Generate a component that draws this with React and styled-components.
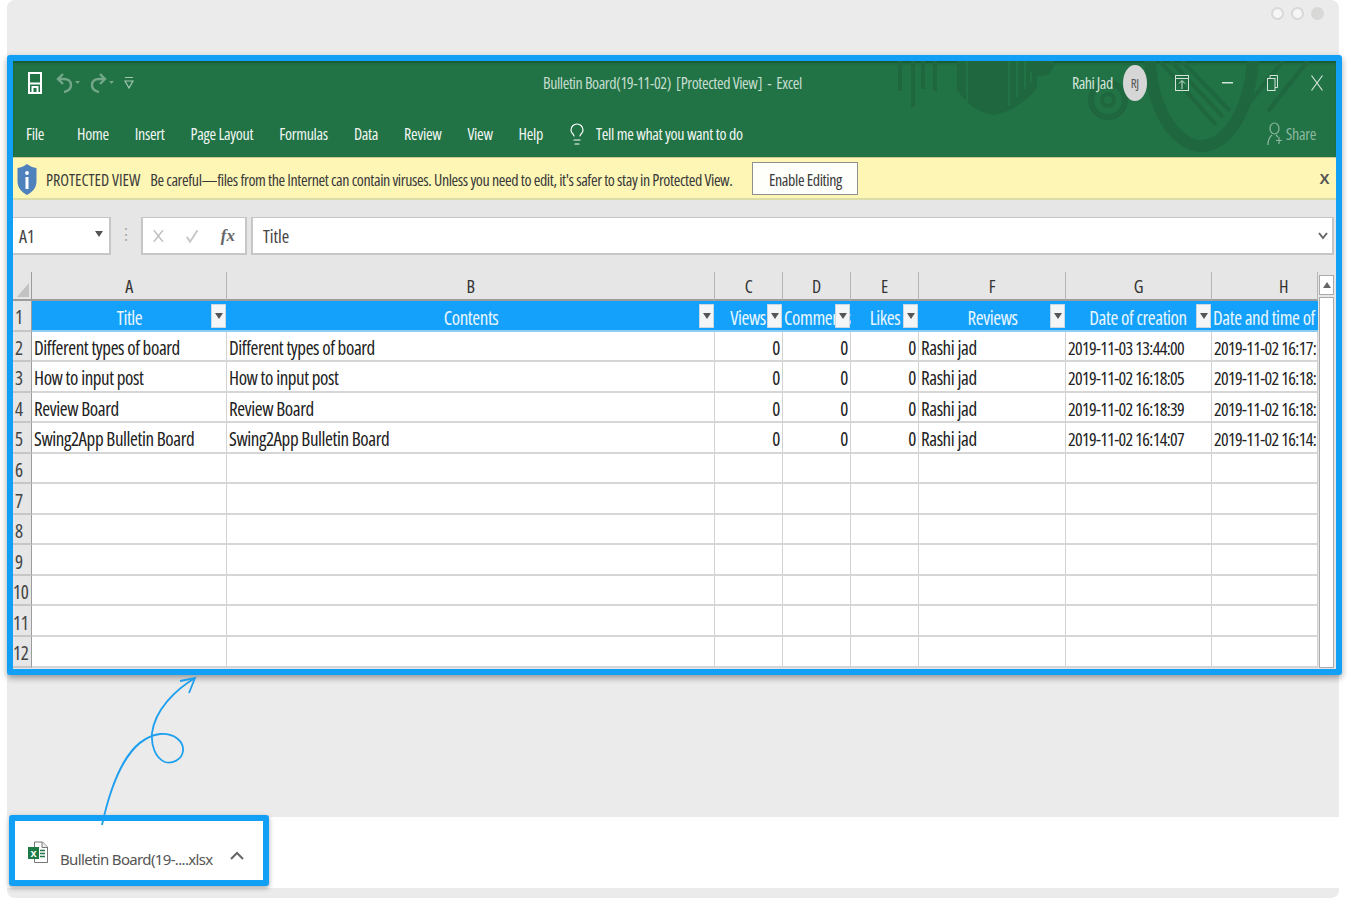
import styled, { createGlobalStyle } from 'styled-components';
import { Lightbulb } from 'lucide-react';

const columns = ['A', 'B', 'C', 'D', 'E', 'F', 'G', 'H'];
const headers = [
  { text: 'Title', filter: true },
  { text: 'Contents', filter: true },
  { text: 'Views', filter: true, pad: 2 },
  { text: 'Comments', filter: true, left: true },
  { text: 'Likes', filter: true },
  { text: 'Reviews', filter: true },
  { text: 'Date of creation', filter: true, pad: 2 },
  { text: 'Date and time of c', filter: false, left: true },
];
const rows = [
  ['Different types of board', '2019-11-03 13:44:00', '2019-11-02 16:17:'],
  ['How to input post', '2019-11-02 16:18:05', '2019-11-02 16:18:'],
  ['Review Board', '2019-11-02 16:18:39', '2019-11-02 16:18:'],
  ['Swing2App Bulletin Board', '2019-11-02 16:14:07', '2019-11-02 16:14:'],
];
const tabs = ['File', 'Home', 'Insert', 'Page Layout', 'Formulas', 'Data', 'Review', 'View', 'Help'];

const GlobalStyle = createGlobalStyle`
  html, body {
    margin: 0;
    padding: 0;
    background: #fff;
    overflow: hidden;
  }
  * {
    box-sizing: border-box;
  }
  body {
    font-family: "Open Sans", "Liberation Sans", Arial, sans-serif;
    font-stretch: 75%;
  }
`;

const Shell = styled.div`
  position: relative;
  width: 1332px;
  height: 898px;
  margin-left: 7px;
  background: #ebebeb;
  border-radius: 8px;
`;
const TopBar = styled.div`
  height: 55px;
  display: flex;
  justify-content: flex-end;
  gap: 7px;
  padding: 7px 15px 0 0;
`;
const Dot = styled.span`
  width: 13px;
  height: 13px;
  border-radius: 50%;
  background: ${p => (p.$filled ? '#d8d8d6' : '#f6f6f6')};
  border: 2px solid #d8d8d6;
`;
const ExcelFrame = styled.div`
  width: 1335px;
  height: 620px;
  border: 6px solid #12a0f7;
  border-radius: 3px;
  background: #e6e6e6;
  box-shadow: 0 3px 6px rgba(0, 0, 0, 0.35);
  overflow: hidden;
`;
const Ribbon = styled.div`
  position: relative;
  height: 96px;
  background: #217346;
  color: #fff;
  overflow: hidden;
  box-shadow: inset 0 3px 3px -1px rgba(0, 0, 0, 0.25);
`;
const RibbonArt = styled.svg`
  position: absolute;
  left: 870px;
  top: 0;
`;
const TitleRow = styled.div`
  position: relative;
  height: 51px;
  padding-bottom: 8px;
  display: grid;
  grid-template-columns: 530px 259px 1fr;
  align-items: center;
`;
const QuickAccess = styled.div`
  display: flex;
  align-items: center;
  gap: 10px;
  padding-left: 15px;
`;
const SaveButton = styled.span`
  display: flex;
  margin-right: 4px;
`;
const WindowTitle = styled.div`
  font-size: 16px;
  letter-spacing: -0.4px;
  color: #c5dcce;
  white-space: pre;
  text-align: left;
`;
const WindowControls = styled.div`
  display: flex;
  align-items: center;
  padding-left: 270px;
  font-size: 16px;
  letter-spacing: -0.5px;
  color: #d3e4da;
  white-space: nowrap;
`;
const Avatar = styled.div`
  width: 24px;
  height: 36px;
  margin: 0 28px 0 10px;
  border-radius: 50%;
  background: #d6d6d6;
  color: #555;
  font-size: 13px;
  display: flex;
  align-items: center;
  justify-content: center;
`;
const ControlIcon = styled.svg`
  flex: none;
  margin-right: ${p => p.$gap || 0}px;
`;
const TabRow = styled.div`
  position: relative;
  height: 45px;
  padding: 0 20px 2px 13px;
  display: flex;
  align-items: center;
  gap: 26px;
  font-size: 16px;
  letter-spacing: -0.3px;
  white-space: nowrap;
`;
const Tab = styled.span`
  color: #f1f6f3;
  &:first-child {
    margin-right: 7px;
  }
`;
const TellMe = styled.span`
  display: flex;
  align-items: center;
  gap: 7px;
  margin-left: -4px;
  color: #f1f6f3;
`;
const Share = styled.span`
  display: flex;
  align-items: center;
  gap: 3px;
  margin-left: auto;
  color: #8db79f;
`;
const Notice = styled.div`
  height: 43px;
  display: flex;
  align-items: center;
  padding: 3px 7px 0 4px;
  background: #fdf6b5;
  border-top: 1px solid #c9cb8e;
  border-bottom: 2px solid #dcdca8;
  color: #3a3a3a;
  font-size: 16px;
  letter-spacing: -0.385px;
  white-space: nowrap;
`;
const NoticeLabel = styled.span`
  margin: 0 10px 0 9px;
  letter-spacing: 0;
`;
const EnableButton = styled.button`
  width: 106px;
  height: 33px;
  margin: -3px 0 0 20px;
  padding: 3px 0 0;
  background: #fefefa;
  border: 1px solid #8f8f8f;
  color: #3a3a3a;
  font: inherit;
  letter-spacing: inherit;
  font-stretch: 75%;
`;
const NoticeClose = styled.span`
  margin: -3px 0 0 auto;
  font-family: "Liberation Sans", sans-serif;
  font-weight: 700;
  font-size: 15px;
  color: #555;
`;
const FormulaRow = styled.div`
  height: 38px;
  margin-top: 17px;
  display: flex;
  color: #444;
  font-size: 18px;
`;
const NameBox = styled.div`
  width: 98px;
  display: flex;
  align-items: center;
  justify-content: space-between;
  padding: 0 6px;
  background: #fff;
  border: 1px solid #c6c6c6;
  border-width: 1px 2px 2px 0;
`;
const Caret = styled.span`
  width: 0;
  height: 0;
  margin-bottom: 3px;
  border: 4px solid transparent;
  border-top: 6px solid #555;
  border-bottom: 0;
`;
const Grip = styled.div`
  width: 30px;
  text-align: center;
  color: #aaa;
  line-height: 34px;
  font-size: 16px;
`;
const FxBox = styled.div`
  width: 106px;
  display: flex;
  align-items: center;
  gap: 22px;
  padding: 0 10px;
  background: #fff;
  border: 2px solid #c6c6c6;
  border-top-width: 1px;
`;
const FxLabel = styled.span`
  font-family: "Liberation Serif", serif;
  font-style: italic;
  font-weight: 700;
  font-size: 17px;
  color: #666;
`;
const FormulaInput = styled.div`
  flex: 1;
  display: flex;
  align-items: center;
  justify-content: space-between;
  margin: 0 2px 0 4px;
  padding: 0 4px 0 10px;
  background: #fff;
  border: 2px solid #c6c6c6;
  border-top-width: 1px;
`;
const SheetArea = styled.div`
  height: 396px;
  margin-top: 17px;
  display: flex;
  overflow: hidden;
`;
const Sheet = styled.div`
  width: 1305px;
  display: grid;
  grid-template-columns: 19px 195px 488px 68px 68px 68px 147px 146px 106px;
  grid-template-rows: 29px repeat(12, 30.55px);
  font-size: 19px;
  letter-spacing: -0.4px;
  color: #222;
`;
const Corner = styled.div`
  position: relative;
  border-right: 1px solid #9c9c9c;
  border-bottom: 2px solid #9c9c9c;
  &::after {
    content: '';
    position: absolute;
    right: 2px;
    bottom: 2px;
    border-left: 12px solid transparent;
    border-bottom: 14px solid #c2c2c2;
  }
`;
const ColumnHead = styled.div`
  display: flex;
  align-items: center;
  justify-content: ${p => (p.$offset ? 'flex-start' : 'center')};
  padding-left: ${p => p.$offset || 0}px;
  border-right: 1px solid #b5b5b5;
  border-bottom: 2px solid #9c9c9c;
  font-size: 18px;
  color: #333;
`;
const RowHead = styled.div`
  display: flex;
  align-items: center;
  padding: 4px 0 0 ${p => (p.$wide ? 0 : 2)}px;
  background: #e6e6e6;
  border-right: 1px solid #9c9c9c;
  border-bottom: 2px solid #c6c6c6;
  color: #444;
`;
const HeaderCell = styled.div`
  position: relative;
  display: flex;
  align-items: center;
  justify-content: ${p => (p.$left ? 'flex-start' : 'center')};
  padding: 5px ${p => p.$pad || 0}px 0 ${p => (p.$left ? 1 : 0)}px;
  background: #14a1fb;
  border-bottom: 2px solid #8fcdf3;
  color: #e9f6ff;
  white-space: nowrap;
  overflow: hidden;
`;
const FilterButton = styled.span`
  position: absolute;
  right: 1px;
  top: 3px;
  width: 15px;
  height: 24px;
  display: flex;
  align-items: center;
  justify-content: center;
  background: #f3f5f7;
  border: 1px solid #c9d7e2;
  &::after {
    content: '';
    border: 4px solid transparent;
    border-top: 6px solid #555;
    border-bottom: 0;
  }
`;
const Cell = styled.div`
  display: flex;
  align-items: center;
  justify-content: ${p => (p.$right ? 'flex-end' : 'flex-start')};
  padding: 4px 2px 0;
  background: #fff;
  border-right: 1px solid #d2d2d2;
  border-bottom: 2px solid #d6d6d6;
  white-space: nowrap;
  overflow: hidden;
  ${p => p.$date && 'font-size: 18px; letter-spacing: -0.65px;'}
`;
const ScrollBar = styled.div`
  flex: 1;
  display: flex;
  flex-direction: column;
  align-items: center;
  gap: 2px;
  padding: 3px 5px 0 1px;
`;
const ScrollUp = styled.div`
  width: 15px;
  height: 20px;
  display: flex;
  align-items: center;
  justify-content: center;
  background: #fff;
  border: 1px solid #aaa;
  &::after {
    content: '';
    border: 4px solid transparent;
    border-bottom: 6px solid #666;
    border-top: 0;
  }
`;
const ScrollTrack = styled.div`
  width: 15px;
  flex: 1;
  background: #fff;
  border: 1px solid #aaa;
`;
const Gap = styled.div`
  height: 142px;
`;
const Arrow = styled.svg`
  position: absolute;
  left: -7px;
  top: 0;
  pointer-events: none;
`;
const DownloadBar = styled.div`
  height: 71px;
  background: #fff;
`;
const DownloadFrame = styled.div`
  position: relative;
  top: -2px;
  left: 2px;
  width: 260px;
  height: 71px;
  display: flex;
  align-items: center;
  padding: 3px 0 0 13px;
  background: #fff;
  border: 6px solid #12a0f7;
  border-radius: 3px;
  box-shadow: 0 2px 5px rgba(0, 0, 0, 0.35);
  font-family: "Noto Sans", "Open Sans", sans-serif;
  font-stretch: 100%;
  font-size: 15px;
  color: #555;
  white-space: nowrap;
`;
const FileName = styled.span`
  margin: 13px 17px 0 12px;
  letter-spacing: -0.65px;
`;
const Chevron = styled.svg`
  margin-top: 7px;
`;

const SaveIcon = () => (
  <svg width="14" height="22" viewBox="0 0 14 22" fill="none" stroke="#fff" strokeWidth="2">
    <rect x="1" y="1" width="12" height="20" />
    <path d="M1 11.500h12M4.500 20v-5h5v5" />
  </svg>
);
const HistoryIcon = ({ flip }) => (
  <svg width="24" height="22" viewBox="0 0 24 22" fill="none" stroke="#74a78a" strokeWidth="2.400">
    <g transform={flip ? 'translate(17 0) scale(-1 1)' : ''}>
      <path d="M8 20c5-1 7-4 7-7 0-4-3-6-7-6H3M7 2 2 7l5 5" />
    </g>
    <path d="M19 9h5l-2.500 3z" fill="#74a78a" stroke="none" />
  </svg>
);
const CustomizeIcon = () => (
  <svg width="10" height="13" viewBox="0 0 10 13" fill="none" stroke="#a4c6b2" strokeWidth="1.200">
    <path d="M1 1.500h8M1 5h8L5 12z" />
  </svg>
);
const ShieldIcon = () => (
  <svg width="20" height="33" viewBox="0 0 20 33">
    <path d="M10 1c3 2.500 6 3.500 9.500 4v13c0 7-4 11-9.500 14C4.500 29 .5 25 .5 18V5C4 4.500 7 3.500 10 1z" fill="#4f81bd" />
    <circle cx="10" cy="10" r="1.900" fill="#fff" />
    <rect x="8.500" y="14" width="3" height="12" fill="#fff" />
  </svg>
);
const UserAddIcon = () => (
  <svg width="16" height="24" viewBox="0 0 16 24" fill="none" stroke="#8db79f" strokeWidth="1.200">
    <ellipse cx="7.500" cy="6.500" rx="4.500" ry="5.500" />
    <path d="M1 23c0-5 1.500-8 4-10M9 13l2 2M12 15v7M9 18.500h6" />
  </svg>
);
const ExcelFileIcon = () => (
  <svg width="20" height="23" viewBox="0 0 20 23">
    <path d="M6.500 1h8l5 5v15.500h-13z" fill="#fff" stroke="#777" />
    <path d="M14 1v5.500h5.500" fill="#eee" stroke="#777" />
    <path d="M12 9.500h5M12 12.500h5M12 15.500h5" stroke="#217346" strokeWidth="1.300" />
    <rect x="0" y="6" width="11" height="12" fill="#1d7a45" />
    <text x="5.500" y="16" textAnchor="middle" fontFamily="Liberation Sans" fontWeight="700" fontSize="11" fill="#fff">x</text>
  </svg>
);

export default function App() {
  return (
    <>
      <GlobalStyle />
      <Shell>
        <TopBar>
          <Dot />
          <Dot />
          <Dot $filled />
        </TopBar>
        <ExcelFrame>
          <Ribbon>
            <RibbonArt width="453" height="96" viewBox="0 0 453 96" fill="none" stroke="#1f673f">
              <path d="M17 0v30M30 0v46M40 0v28M52 0v30" strokeWidth="4" />
              <path d="M74 0h80v26c-8 12-22 24-44 28-16-3-28-12-36-26z" fill="#1f673f" stroke="none" />
              <path d="M84 0v40M126 0v45M134 0v36M142 0v28M148 0v22" stroke="#217346" strokeWidth="2" />
              <circle cx="158" cy="2" r="13" fill="#1f673f" stroke="none" />
              <circle cx="225" cy="39" r="17" strokeWidth="6" />
              <circle cx="225" cy="39" r="6" strokeWidth="4" />
              <path d="M267 0C270 60 300 85 317 85 345 85 366 50 370 0" strokeWidth="12" />
              <path d="M277 0l56 64M288 0l52 56M299 0l48 50M400 0l-40 50M425 0l-40 50" strokeWidth="4" />
            </RibbonArt>
            <TitleRow>
              <QuickAccess>
                <SaveButton><SaveIcon /></SaveButton>
                <HistoryIcon />
                <HistoryIcon flip />
                <CustomizeIcon />
              </QuickAccess>
              <WindowTitle>Bulletin Board(19-11-02)  [Protected View]  -  Excel</WindowTitle>
              <WindowControls>
                Rahi Jad
                <Avatar>RJ</Avatar>
                <ControlIcon $gap={33} width="14" height="16" viewBox="0 0 14 16" fill="none" stroke="#d3e4da">
                  <rect x=".5" y=".5" width="13" height="15" />
                  <path d="M.5 3.500h13M7 14V6M4 8.500 7 5.500l3 3" />
                </ControlIcon>
                <ControlIcon $gap={34} width="11" height="2" viewBox="0 0 11 2">
                  <rect width="11" height="1.500" fill="#d3e4da" />
                </ControlIcon>
                <ControlIcon $gap={33} width="11" height="16" viewBox="0 0 11 16" fill="none" stroke="#d3e4da">
                  <rect x=".5" y="3.500" width="7.500" height="12" />
                  <path d="M3 3.500V.5h7.500v12H8" />
                </ControlIcon>
                <ControlIcon width="12" height="16" viewBox="0 0 12 16" fill="none" stroke="#d3e4da" strokeWidth="1.200">
                  <path d="M.5 .5l11 15M11.500 .5l-11 15" />
                </ControlIcon>
              </WindowControls>
            </TitleRow>
            <TabRow>
              {tabs.map(t => <Tab key={t}>{t}</Tab>)}
              <TellMe>
                <Lightbulb size={24} strokeWidth={1.200} color="#fff" />
                Tell me what you want to do
              </TellMe>
              <Share>
                <UserAddIcon />
                Share
              </Share>
            </TabRow>
          </Ribbon>
          <Notice>
            <ShieldIcon />
            <NoticeLabel>PROTECTED VIEW</NoticeLabel>
            Be careful—files from the Internet can contain viruses. Unless you need to edit, it's safer to stay in Protected View.
            <EnableButton>Enable Editing</EnableButton>
            <NoticeClose>X</NoticeClose>
          </Notice>
          <FormulaRow>
            <NameBox>A1<Caret /></NameBox>
            <Grip>⋮</Grip>
            <FxBox>
              <svg width="13" height="16" viewBox="0 0 13 16" stroke="#bdbdbd" strokeWidth="1.600"><path d="M1 1l11 14M12 1 1 15" /></svg>
              <svg width="16" height="16" viewBox="0 0 16 16" fill="none" stroke="#c9c9c9" strokeWidth="2.500"><path d="M1 9l4 6L14 1" /></svg>
              <FxLabel>fx</FxLabel>
            </FxBox>
            <FormulaInput>
              Title
              <svg width="10" height="8" viewBox="0 0 10 8" fill="none" stroke="#666" strokeWidth="2"><path d="M1 1l4 5 4-5" /></svg>
            </FormulaInput>
          </FormulaRow>
          <SheetArea>
            <Sheet>
              <Corner />
              {columns.map(c => <ColumnHead key={c} $offset={c === 'H' ? 67 : 0}>{c}</ColumnHead>)}
              <RowHead>1</RowHead>
              {headers.map(h => (
                <HeaderCell key={h.text} $left={h.left} $pad={h.pad}>
                  {h.text}
                  {h.filter && <FilterButton />}
                </HeaderCell>
              ))}
              {rows.map((r, i) => [
                <RowHead key={`h${i}`}>{i + 2}</RowHead>,
                <Cell key={`a${i}`}>{r[0]}</Cell>,
                <Cell key={`b${i}`}>{r[0]}</Cell>,
                <Cell key={`c${i}`} $right>0</Cell>,
                <Cell key={`d${i}`} $right>0</Cell>,
                <Cell key={`e${i}`} $right>0</Cell>,
                <Cell key={`f${i}`}>Rashi jad</Cell>,
                <Cell key={`g${i}`} $date>{r[1]}</Cell>,
                <Cell key={`i${i}`} $date>{r[2]}</Cell>,
              ])}
              {[6, 7, 8, 9, 10, 11, 12].map(n => [
                <RowHead key={`h${n}`} $wide={n > 9}>{n}</RowHead>,
                ...columns.map(c => <Cell key={`${c}${n}`} />),
              ])}
            </Sheet>
            <ScrollBar>
              <ScrollUp />
              <ScrollTrack />
            </ScrollBar>
          </SheetArea>
        </ExcelFrame>
        <Gap />
        <DownloadBar>
          <DownloadFrame>
            <ExcelFileIcon />
            <FileName>Bulletin Board(19-....xlsx</FileName>
            <Chevron width="14" height="9" viewBox="0 0 14 9" fill="none" stroke="#666" strokeWidth="2"><path d="M1 8l6-6 6 6" /></Chevron>
          </DownloadFrame>
        </DownloadBar>
        <Arrow width="300" height="899" viewBox="0 0 300 899" fill="none" stroke="#1e9fee" strokeWidth="1.800">
          <path d="M102 825C113 775 130 738 160 734c15-1 24 8 23 17-1 9-11 13-18 11-10-4-14-17-13-29 3-23 23-43 43-55" />
          <path d="M180 681l15-3-6 15" />
        </Arrow>
      </Shell>
    </>
  );
}
